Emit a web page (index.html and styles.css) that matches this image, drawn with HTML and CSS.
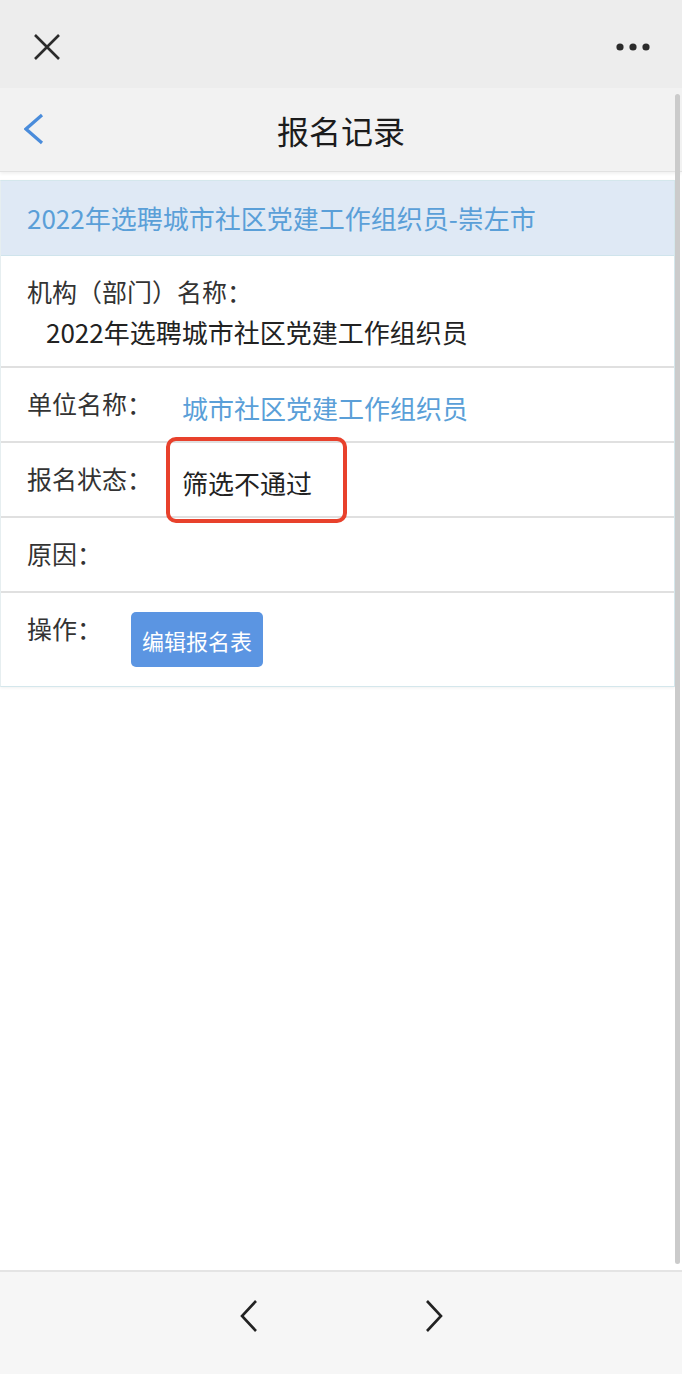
FILE: index.html
```html
<!DOCTYPE html>
<html>
<head>
    <meta charset="utf-8">
    <title>报名记录</title>
    <link rel="stylesheet" href="styles.css">
</head>
<body>
    <div class="top-bar">
        <svg class="close-icon" width="26" height="26" viewBox="0 0 26 26">
            <path d="M1 1 L25 25 M25 1 L1 25" stroke="#2b2b2b" stroke-width="2.6" fill="none"/>
        </svg>
        <svg class="more-icon" width="34" height="8" viewBox="0 0 34 8">
            <circle cx="4" cy="4" r="3.6" fill="#2b2b2b"/>
            <circle cx="17" cy="4" r="3.6" fill="#2b2b2b"/>
            <circle cx="30" cy="4" r="3.6" fill="#2b2b2b"/>
        </svg>
    </div>

    <div class="page-header">
        <svg class="back-icon" width="20" height="32" viewBox="0 0 20 32">
            <polyline points="18,2 2,16 18,30" stroke="#4a8cdb" stroke-width="3.2" fill="none"/>
        </svg>
        <h1>报名记录</h1>
    </div>

    <div class="main">
        <div class="record-card">
            <div class="record-title">2022年选聘城市社区党建工作组织员-崇左市</div>

            <div class="record-row stacked">
                <span class="label">机构（部门）名称：</span>
                <span class="value indent">2022年选聘城市社区党建工作组织员</span>
            </div>
            <div class="record-row">
                <span class="label">单位名称：</span>
                <span class="value link">城市社区党建工作组织员</span>
            </div>
            <div class="record-row">
                <span class="label">报名状态：</span>
                <span class="value">筛选不通过</span>
                <div class="mark-box"></div>
            </div>
            <div class="record-row">
                <span class="label">原因：</span>
                <span class="value"></span>
            </div>
            <div class="record-row actions">
                <span class="label">操作：</span>
                <button class="edit-btn">编辑报名表</button>
            </div>
        </div>
        <div class="scroll-thumb"></div>
    </div>

    <div class="bottom-bar">
        <svg width="20" height="34" viewBox="0 0 20 34">
            <polyline points="17,2 3,17 17,32" stroke="#222" stroke-width="2.6" fill="none"/>
        </svg>
        <svg width="20" height="34" viewBox="0 0 20 34">
            <polyline points="3,2 17,17 3,32" stroke="#222" stroke-width="2.6" fill="none"/>
        </svg>
    </div>
</body>
</html>
```

FILE: styles.css
```css
body {
    margin: 0;
    width: 682px;
    height: 1374px;
    display: flex;
    flex-direction: column;
    font-family: "Noto Sans CJK SC", "Noto Sans", sans-serif;
    background: #fff;
    color: #333;
}

.top-bar {
    height: 88px;
    flex: none;
    background: #ededed;
    display: flex;
    align-items: center;
    justify-content: space-between;
    padding: 0 32px 0 34px;
    box-sizing: border-box;
}

.top-bar .close-icon,
.top-bar .more-icon {
    margin-top: 5px;
}

.page-header {
    height: 84px;
    flex: none;
    background: #f2f2f2;
    position: relative;
    display: flex;
    align-items: center;
    justify-content: center;
    border-bottom: 1px solid #e2e2e2;
    box-sizing: border-box;
    box-shadow: 0 2px 3px rgba(0, 0, 0, 0.06);
    z-index: 1;
}

.page-header .back-icon {
    position: absolute;
    left: 24px;
    top: 25px;
}

.page-header h1 {
    margin: 0;
    font-size: 32px;
    font-weight: normal;
    color: #1c1c1c;
    line-height: 40px;
}

.main {
    flex: 1;
    position: relative;
    padding: 8px 7px 0 0;
    background: #fff;
}

.record-card {
    border: 1px solid #d4e7ec;
    border-left-color: #e6eef0;
    box-shadow: 0 1px 3px rgba(0, 0, 0, 0.06);
}

.record-title {
    background: #dfe9f5;
    border-bottom: 1px solid #cfe4ec;
    padding: 17px 26px;
    font-size: 26px;
    line-height: 40px;
    color: #5a9fd8;
}

.record-row {
    position: relative;
    display: flex;
    align-items: flex-start;
    padding: 15px 26px 13px;
    border-bottom: 2px solid #e0e0e0;
    font-size: 26px;
    line-height: 40px;
}

.record-row .label {
    width: 155px;
    flex: none;
    font-size: 25px;
    color: #333;
}

.record-row .value {
    margin-top: 5px;
    min-height: 40px;
    color: #222;
}

.record-row .value.link {
    color: #5a9fd8;
}

.record-row.stacked {
    flex-direction: column;
    padding-bottom: 14px;
}

.record-row.stacked .label {
    width: auto;
}

.record-row.stacked .value {
    margin-top: 1px;
    padding-left: 19px;
}

.record-row.actions {
    border-bottom: none;
    padding-bottom: 15px;
}

.record-row.actions .label {
    width: 104px;
}

.edit-btn {
    margin: 4px 0;
    height: 55px;
    padding: 0 11px;
    border: none;
    border-radius: 5px;
    background: #5b95e2;
    color: #fff;
    font-family: "Noto Sans CJK SC", sans-serif;
    font-size: 22px;
    cursor: pointer;
}

/* red marker drawn over the status value */
.mark-box {
    position: absolute;
    left: 165px;
    top: -6px;
    width: 173px;
    height: 78px;
    border: 4px solid #e8412c;
    border-radius: 10px;
}

.scroll-thumb {
    position: absolute;
    right: 2px;
    top: -78px;
    bottom: 6px;
    width: 5px;
    border-radius: 3px;
    background: #cbcbcb;
    z-index: 2;
}

.bottom-bar {
    height: 104px;
    flex: none;
    background: #f6f6f6;
    border-top: 2px solid #e4e4e4;
    box-sizing: border-box;
    display: flex;
    align-items: center;
    justify-content: center;
    gap: 165px;
    padding-bottom: 14px;
}
```
